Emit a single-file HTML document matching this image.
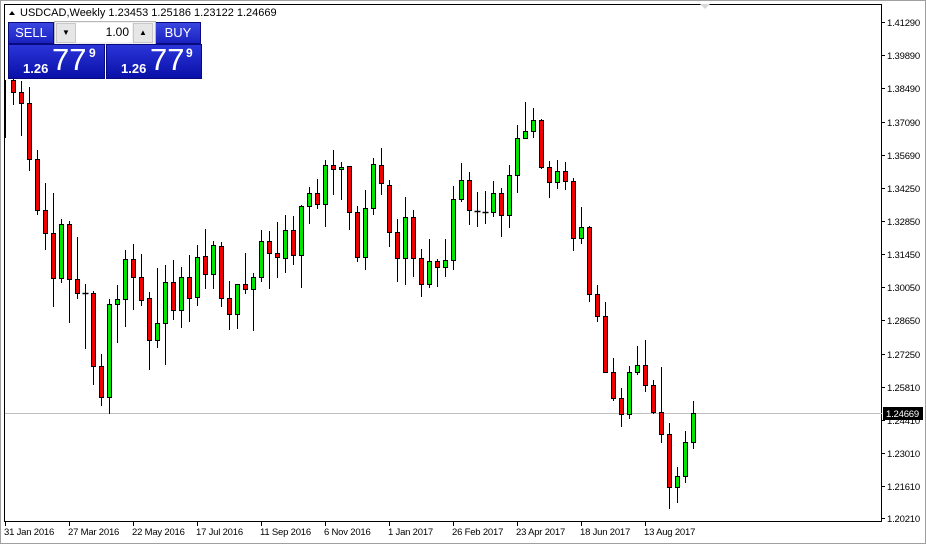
<!DOCTYPE html>
<html><head><meta charset="utf-8"><style>
body{margin:0;width:926px;height:544px;overflow:hidden;background:#fff;font-family:"Liberation Sans",sans-serif;}
#wrap{position:absolute;left:0;top:0;width:924px;height:542px;border:1px solid #a0a0a0;}
svg{position:absolute;left:0;top:0}
.btn{position:absolute;background:linear-gradient(#3a46e0,#1a22c0);color:#fff;font-size:13px;text-align:center;line-height:20px;border:1px solid #0a0a80}
.q{position:absolute;background:linear-gradient(#2b35d8,#0a10a8);color:#fff;border:1px solid #0a0a80}
</style></head><body>
<div id="wrap"></div>
<svg id="s" width="926" height="544" font-family="Liberation Sans, sans-serif" font-size="9.5"></svg>
<div class="btn" style="left:8px;top:22px;width:44px;height:20px">SELL</div>
<div class="btn" style="left:155px;top:22px;width:44px;height:20px">BUY</div>
<div style="position:absolute;left:54px;top:21px;width:100px;height:22px;background:#f0f0f0;border:1px solid #b8b8b8">
 <div style="position:absolute;left:1px;top:1px;width:18px;height:18px;background:#e6e6e6;border:1px solid #c8c8c8;font-size:8px;text-align:center;line-height:18px">▼</div>
 <div style="position:absolute;left:21px;top:1px;width:56px;height:19px;background:#fff;font-size:12px;text-align:right;line-height:19px;padding-right:3px;box-sizing:border-box">1.00</div>
 <div style="position:absolute;left:78px;top:1px;width:18px;height:18px;background:#e6e6e6;border:1px solid #c8c8c8;font-size:8px;text-align:center;line-height:18px">▲</div>
</div>
<div class="q" style="left:8px;top:44px;width:95px;height:33px"><span style="position:absolute;left:14px;top:16px;font-size:13px;font-weight:bold">1.26</span><span style="position:absolute;left:43px;top:-3px;font-size:31px">77</span><span style="position:absolute;left:80px;top:1px;font-size:12px;font-weight:bold">9</span></div>
<div class="q" style="left:106px;top:44px;width:94px;height:33px"><span style="position:absolute;left:14px;top:16px;font-size:13px;font-weight:bold">1.26</span><span style="position:absolute;left:43px;top:-3px;font-size:31px">77</span><span style="position:absolute;left:79px;top:1px;font-size:12px;font-weight:bold">9</span></div>
<script>
var d=[[13,78,105,80,92],[21,81,136,92,103],[29,87,171,103,159],[37,150,215,159,210],[45,183,250,210,233],[53,193,307,233,278],[61,219,283,278,224],[69,221,323,224,279],[77,237,299,279,293],[85,284,349,293,293],[93,291,385,293,366],[101,354,406,366,397],[109,299,414,397,304],[117,285,343,304,299],[125,250,327,299,259],[133,244,310,259,277],[141,254,306,277,300],[149,292,370,298,340],[157,268,348,340,323],[165,265,365,323,282],[173,260,320,282,310],[181,267,328,310,277],[189,255,322,277,298],[197,245,306,297,257],[205,229,289,256,274],[213,241,289,274,245],[221,242,307,246,298],[229,281,330,298,314],[237,284,329,314,284],[245,253,294,284,289],[253,273,331,289,277],[261,230,282,277,241],[269,231,289,241,253],[277,222,278,253,257],[285,215,273,258,230],[293,216,265,230,255],[301,205,288,255,206],[309,187,224,206,193],[317,179,209,193,204],[325,160,227,204,165],[333,150,195,165,169],[341,162,200,169,167],[349,166,230,166,212],[357,206,262,212,257],[365,190,270,257,208],[373,158,215,208,164],[381,148,195,165,183],[389,180,247,185,232],[397,219,282,232,258],[405,197,285,258,217],[413,210,277,217,258],[421,249,297,258,284],[429,239,288,284,261],[437,259,287,261,267],[445,239,277,267,260],[453,186,270,260,199],[461,163,202,199,180],[469,172,225,180,210],[477,192,227,211,211],[485,191,224,212,212],[493,181,217,212,193],[501,188,237,193,215],[509,165,228,215,175],[517,125,193,175,138],[525,102,138,138,131],[533,108,138,131,120],[541,119,169,120,167],[549,161,198,167,182],[557,160,189,182,171],[565,162,190,171,181],[573,178,251,181,238],[581,207,244,238,227],[589,226,302,227,294],[597,285,322,294,316],[605,302,373,316,372],[613,358,401,372,398],[621,388,427,398,414],[629,366,419,414,372],[637,346,375,372,365],[645,340,392,365,385],[653,380,414,385,412],[661,367,443,412,434],[669,423,509,434,487],[677,467,503,487,476],[685,431,483,476,442],[693,401,449,442,413]];
var h='<rect x="4.5" y="4.5" width="877" height="517" fill="none" stroke="#000"/>';
h+='<line x1="5" y1="413.5" x2="882" y2="413.5" stroke="#c0c0c0"/>';
h+='<line x1="5.5" y1="80" x2="5.5" y2="138" stroke="#000"/>';
h+='<polygon points="700,4 710,4 705,9" fill="#d8d8d8"/>';
d.forEach(function(c){var x=c[0]+.5,o=c[3],cl=c[4];
h+='<line x1="'+x+'" y1="'+c[1]+'" x2="'+x+'" y2="'+c[2]+'" stroke="#000"/>';
if(Math.abs(o-cl)<1){h+='<line x1="'+(x-3)+'" y1="'+(o+.5)+'" x2="'+(x+3)+'" y2="'+(o+.5)+'" stroke="#000" stroke-width="1.5"/>';}
else{var t=Math.min(o,cl),b=Math.max(o,cl);h+='<rect x="'+(x-2)+'" y="'+(t+.5)+'" width="4" height="'+(b-t)+'" fill="'+(cl<o?'#00e600':'#f00000')+'" stroke="#000"/>';}});
var p=["1.41290","1.39890","1.38490","1.37090","1.35690","1.34250","1.32850","1.31450","1.30050","1.28650","1.27250","1.25810","1.24410","1.23010","1.21610","1.20210"];
var py=[22,55,88,122,155,188,221,254,287,320,354,387,420,453,486,518];
p.forEach(function(v,i){h+='<line x1="882" y1="'+(py[i]+.5)+'" x2="885" y2="'+(py[i]+.5)+'" stroke="#000"/><text x="887" y="'+(py[i]+4)+'" letter-spacing="-0.2">'+v+'</text>';});
h+='<rect x="883" y="407" width="40" height="13" fill="#000"/><text x="886" y="417" fill="#fff" letter-spacing="-0.2">1.24669</text>';
var dt=["31 Jan 2016","27 Mar 2016","22 May 2016","17 Jul 2016","11 Sep 2016","6 Nov 2016","1 Jan 2017","26 Feb 2017","23 Apr 2017","18 Jun 2017","13 Aug 2017"];
dt.forEach(function(v,i){var x=5+64*i;h+='<line x1="'+(x+.5)+'" y1="522" x2="'+(x+.5)+'" y2="526" stroke="#000"/><text x="'+(x-1)+'" y="535" letter-spacing="-0.2">'+v+'</text>';});
h+='<polygon points="9,15 15,15 12,11" fill="#000"/><text x="20" y="16" font-size="11">USDCAD,Weekly  1.23453 1.25186 1.23122 1.24669</text>';
document.getElementById('s').innerHTML=h;
</script>
</body></html>
